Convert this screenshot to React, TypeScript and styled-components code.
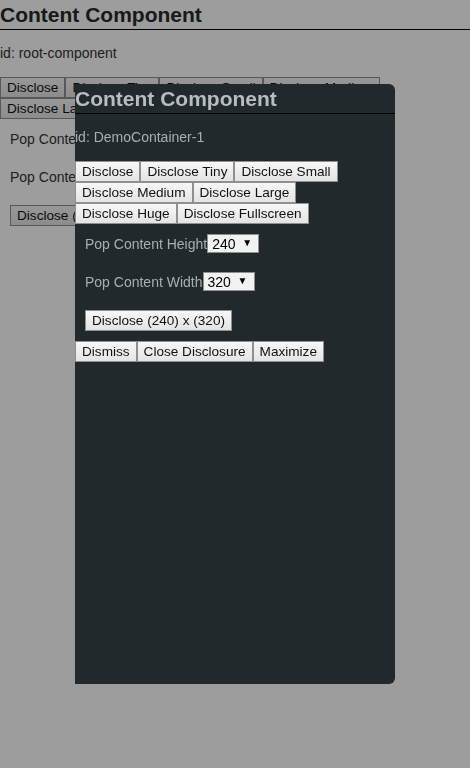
import React, { useState } from 'react';
import styled, { createGlobalStyle } from 'styled-components';

const GlobalStyle = createGlobalStyle`
  html, body {
    margin: 0;
    padding: 0;
    background: #ffffff;
    font-family: 'Liberation Sans', Arial, sans-serif;
  }
`;

interface ThemeProps {
  $dark?: boolean;
}

const Component = styled.div<ThemeProps>`
  color: ${p => (p.$dark ? '#a9aeb0' : '#333333')};
  font-size: 14px;
`;

const Title = styled.div<ThemeProps>`
  height: 29px;
  line-height: 29px;
  font-size: 21px;
  font-weight: bold;
  color: ${p => (p.$dark ? '#b9bdbf' : '#2a2a2a')};
  border-bottom: 1px solid #000;
  white-space: nowrap;
`;

const IdLine = styled.div`
  padding: 15px 0 16px;
  line-height: 16px;
  white-space: nowrap;
`;

const ButtonBar = styled.div`
  display: flex;
  flex-wrap: wrap;
`;

const Button = styled.button`
  font-family: 'Liberation Sans', Arial, sans-serif;
  font-size: 13.6px;
  line-height: 17px;
  height: 21px;
  padding: 1px 6px;
  color: #111;
  background: linear-gradient(#f7f7f7, #e4e4e4);
  border: 1px solid #8f8f8f;
  border-radius: 0;
  white-space: nowrap;
  cursor: pointer;
`;

const Controls = styled.div`
  display: flex;
  flex-direction: column;
  align-items: flex-start;
  gap: 19px;
  padding: 10px;
`;

const Field = styled.label`
  display: flex;
  align-items: center;
  height: 19px;
  white-space: nowrap;
`;

const SelectWrap = styled.span`
  position: relative;
  display: inline-block;

  &::after {
    content: '▼';
    position: absolute;
    right: 7px;
    top: 3px;
    font-size: 10px;
    color: #000;
    pointer-events: none;
  }
`;

const Select = styled.select`
  appearance: none;
  width: 52px;
  height: 19px;
  padding: 0 0 0 4px;
  font-family: 'Liberation Sans', Arial, sans-serif;
  font-size: 14px;
  color: #000;
  background: #f2f2f2;
  border: 1px solid #8f8f8f;
  border-radius: 0;
`;

const Overlay = styled.div`
  position: fixed;
  inset: 0;
  background: rgba(0, 0, 0, 0.385);
`;

const Panel = styled.div`
  position: fixed;
  left: 75px;
  top: 84px;
  width: 320px;
  height: 600px;
  background: #22292c;
  border-radius: 0 6px 6px 0;
  overflow: hidden;
`;

const sizes = ['Disclose', 'Disclose Tiny', 'Disclose Small', 'Disclose Medium', 'Disclose Large', 'Disclose Huge', 'Disclose Fullscreen'];

interface ContentProps {
  id: string;
  dark?: boolean;
  closable?: boolean;
}

const ContentComponent: React.FC<ContentProps> = ({ id, dark, closable }) => {
  const [height, setHeight] = useState('240');
  const [width, setWidth] = useState('320');

  return (
    <Component $dark={dark}>
      <Title $dark={dark}>Content Component</Title>
      <IdLine>id: {id}</IdLine>
      <ButtonBar>
        {sizes.map(s => (
          <Button key={s}>{s}</Button>
        ))}
      </ButtonBar>
      <Controls>
        <Field>
          Pop Content Height
          <SelectWrap>
            <Select value={height} onChange={e => setHeight(e.target.value)}>
              <option>120</option>
              <option>240</option>
              <option>480</option>
            </Select>
          </SelectWrap>
        </Field>
        <Field>
          Pop Content Width
          <SelectWrap>
            <Select value={width} onChange={e => setWidth(e.target.value)}>
              <option>160</option>
              <option>320</option>
              <option>640</option>
            </Select>
          </SelectWrap>
        </Field>
        <Button>
          Disclose ({height}) x ({width})
        </Button>
      </Controls>
      {closable && (
        <ButtonBar>
          <Button>Dismiss</Button>
          <Button>Close Disclosure</Button>
          <Button>Maximize</Button>
        </ButtonBar>
      )}
    </Component>
  );
};

const App: React.FC = () => (
  <>
    <GlobalStyle />
    <ContentComponent id="root-component" />
    <Overlay />
    <Panel>
      <ContentComponent id="DemoContainer-1" dark closable />
    </Panel>
  </>
);

export default App;
